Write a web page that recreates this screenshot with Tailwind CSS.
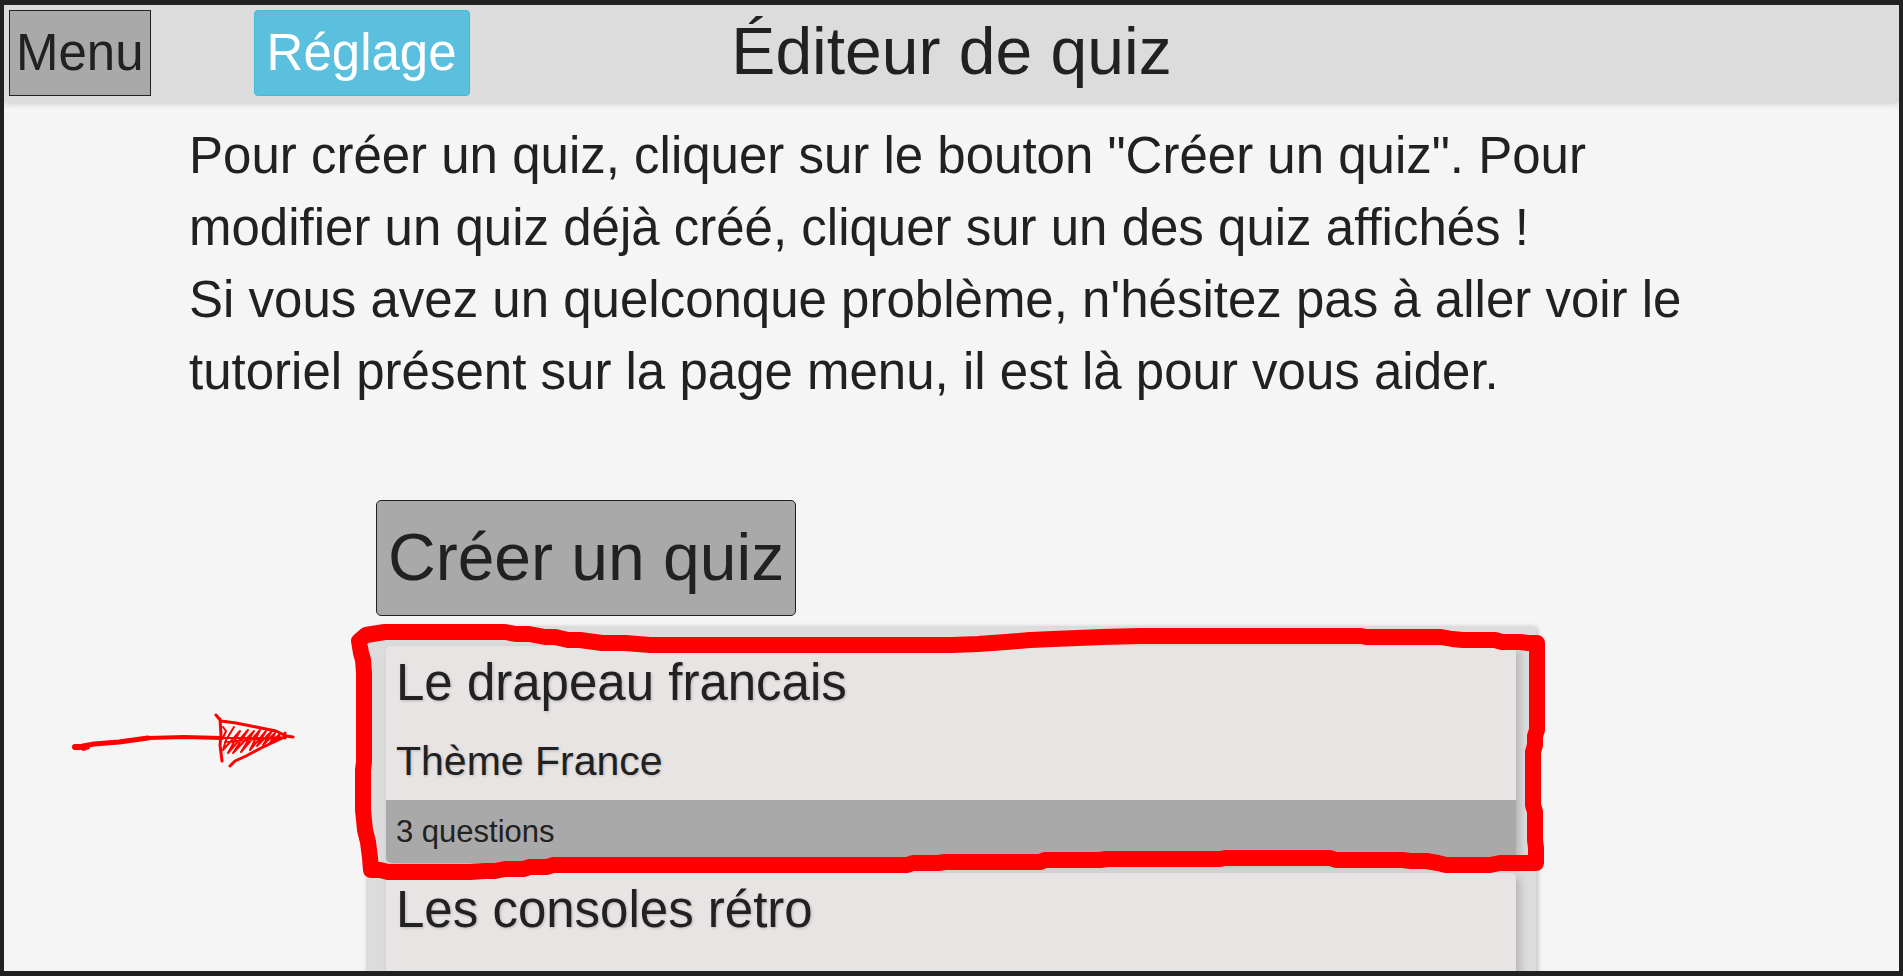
<!DOCTYPE html>
<html lang="fr">
<head>
<meta charset="utf-8">
<title>Éditeur de quiz</title>
<script src="https://cdn.jsdelivr.net/npm/@tailwindcss/browser@4"></script>
</head>
<body class="flex h-screen flex-col overflow-hidden border-x-4 border-y-5 border-[#212121] bg-[#f5f5f5] font-['Liberation_Sans',Arial,sans-serif] text-[51px] leading-[72px] text-[#212121]">
  <header class="grid shrink-0 grid-cols-[1fr_auto_1fr] items-start bg-[#dcdcdc] px-[5px] pt-[5px] pb-[6px] shadow-[0_2px_6px_rgba(0,0,0,0.16)]">
    <div class="flex gap-[103px]">
      <button class="border border-[#212121] bg-[#a9a9a9] px-[6px] py-[6px]">Menu</button>
      <button class="rounded-[4px] border border-[#46b8da] bg-[#5bc0de] px-[12px] py-[6px] text-white">Réglage</button>
    </div>
    <h1 class="pt-[5px] text-[66px]">Éditeur de quiz</h1>
    <div></div>
  </header>

  <main class="min-h-0 flex-1 overflow-hidden pt-[18px] pr-px">
    <p class="mx-auto max-w-[1524px]">Pour créer un quiz, cliquer sur le bouton "Créer un quiz". Pour modifier un quiz déjà créé, cliquer sur un des quiz affichés !<br>Si vous avez un quelconque problème, n'hésitez pas à aller voir le tutoriel présent sur la page menu, il est là pour vous aider.</p>

    <div class="mx-auto mt-[92px] max-w-[1170px]">
      <button class="ml-[10px] block rounded-[5px] border border-[#212121] bg-[#a9a9a9] px-[11px] pt-[20px] pb-[22px] text-[66px]">Créer un quiz</button>

      <section class="relative mt-[10px] flex flex-col gap-[10px] rounded-t-[4px] bg-[#dcdcdc] p-[20px] shadow-[2px_1px_5px_rgba(0,0,0,0.2)]">
        <article class="rounded-[5px] bg-[#e8e4e3] shadow-[4px_4px_8px_rgba(0,0,0,0.18)]">
          <h2 class="px-[10px] pt-px [text-shadow:1px_1px_3px_rgba(0,0,0,0.2)]">Le drapeau francais</h2>
          <p class="px-[10px] pt-[13px] pb-[10px] text-[41px] leading-[58px] [text-shadow:1px_1px_3px_rgba(0,0,0,0.2)]">Thème France</p>
          <p class="rounded-b-[5px] bg-[#a9a9a9] px-[10px] text-[31px] leading-[63px]">3 questions</p>
        </article>
        <article class="min-h-[217px] rounded-[5px] bg-[#e8e4e3] shadow-[4px_4px_8px_rgba(0,0,0,0.18)]">
          <h2 class="px-[10px] pt-px [text-shadow:1px_1px_3px_rgba(0,0,0,0.2)]">Les consoles rétro</h2>
        </article>

        <!-- Hand-drawn frame and arrow over the first quiz -->
        <svg class="pointer-events-none absolute top-0 left-0 h-[250px] w-[1170px] overflow-visible" viewBox="366 626 1170 250" fill="none" stroke="#ff0000" stroke-linecap="round" stroke-linejoin="round" aria-hidden="true">
          <path stroke-width="16" d="M359 641L366 635L385 632H505L516 634H529L545 637H555L568 640H580L602 643H625L650 645H952L978 644L1006 642L1030 640L1053 639L1102 637L1139 636H1361L1366 637H1441L1452 639L1463 640H1495L1502 642H1520L1528 643H1537V730L1535 736V745L1533 752V805L1535 812V840L1536 848V863H1500L1490 865H1446L1438 863L1426 861H1411L1402 860H1336L1330 858H1225L1220 859H1106L1100 860H1045L1040 862H945L938 863H913L907 865H553L547 867H530L523 869H505L495 871H485L470 872H388L380 870H371L370 858L368 842L365 830L363 810V770L364 762V673L363 660L361 653Z"/>
          <path stroke-width="6" d="M75 747L83 747"/>
          <path stroke-width="5" d="M83 746L94 744L119 742L148 738"/>
          <path stroke-width="4" d="M148 738L184 737L222 738"/>
          <path stroke-width="2" d="M83 750L89 748M222 738L280 738"/>
          <path stroke-width="3" d="M216 715L221 721L236 723L256 727L276 731L286 736L293 737M286 736L276 741L261 748L246 756L235 761L230 766M220 719L221 735L220 745L222 761M285 733V738"/>
          <path stroke-width="2" d="M223 727L226 731L223 738M234 727L226 740L223 750L240 731L228 753L248 730L233 753L254 731L241 752L260 730L250 750L266 731L257 746L272 731L263 745L275 733L270 743L281 733L275 741M225 742L280 737"/>
        </svg>
      </section>
    </div>
  </main>
</body>
</html>
